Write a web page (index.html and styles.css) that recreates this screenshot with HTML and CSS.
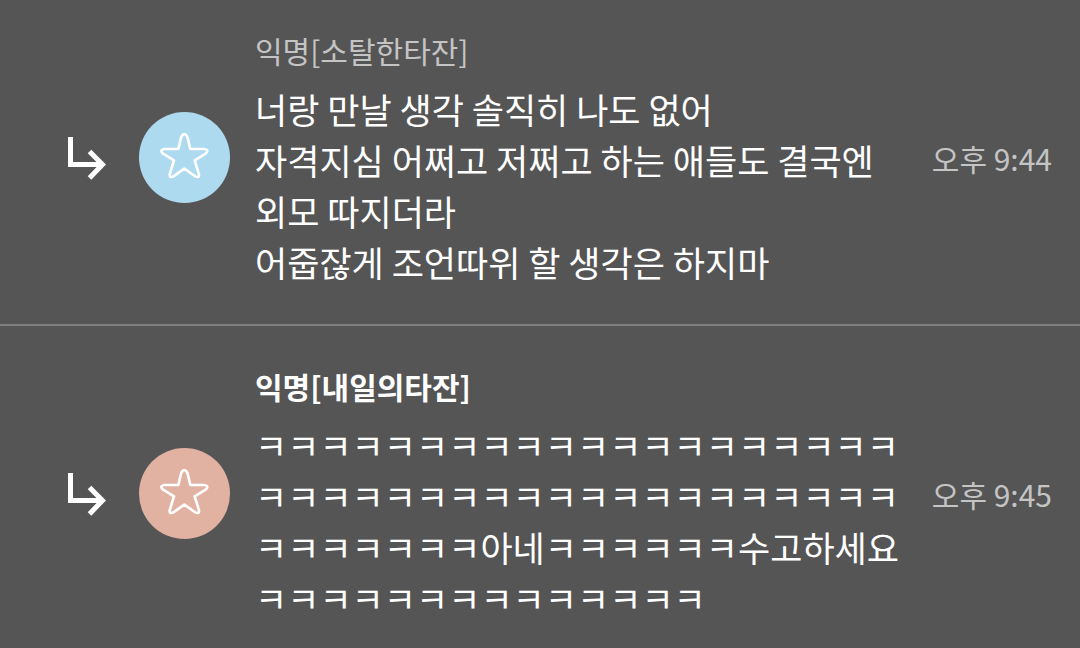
FILE: index.html
```html
<!DOCTYPE html>
<html lang="ko">
<head>
  <meta charset="UTF-8" />
  <meta name="viewport" content="width=device-width, initial-scale=1.0" />
  <title>댓글</title>
  <link rel="stylesheet" href="styles.css">
</head>
<body>
  <main class="replies">
    <article class="reply">
      <svg class="reply-arrow" viewBox="0 0 38 48" aria-hidden="true">
        <path d="M2.5 4V31.5H34M21.5 18.5L34.5 31.5L21.5 45" />
      </svg>
      <div class="avatar blue">
        <svg class="star" viewBox="353 128 162 153" aria-hidden="true">
          <path d="M423 142Q432 127 441 142L450 179H492Q507 182 497 192L463 213L476 255Q477 267 465 261L432 238L399 261Q387 267 388 255L401 213L367 192Q357 182 372 179H414Z" />
        </svg>
      </div>
      <div class="content">
        <h2 class="name">익명[소탈한타잔]</h2>
        <p class="text">너랑 만날 생각 솔직히 나도 없어<br>자격지심 어쩌고 저쩌고 하는 애들도 결국엔 외모 따지더라<br>어줍잖게 조언따위 할 생각은 하지마</p>
      </div>
      <time class="time" datetime="21:44">오후 9:44</time>
    </article>

    <article class="reply">
      <svg class="reply-arrow" viewBox="0 0 38 48" aria-hidden="true">
        <path d="M2.5 4V31.5H34M21.5 18.5L34.5 31.5L21.5 45" />
      </svg>
      <div class="avatar pink">
        <svg class="star" viewBox="353 128 162 153" aria-hidden="true">
          <path d="M423 142Q432 127 441 142L450 179H492Q507 182 497 192L463 213L476 255Q477 267 465 261L432 238L399 261Q387 267 388 255L401 213L367 192Q357 182 372 179H414Z" />
        </svg>
      </div>
      <div class="content">
        <h2 class="name mine">익명[내일의타잔]</h2>
        <p class="text">ㅋㅋㅋㅋㅋㅋㅋㅋㅋㅋㅋㅋㅋㅋㅋㅋㅋㅋㅋㅋㅋㅋㅋㅋㅋㅋㅋㅋㅋㅋㅋㅋㅋㅋㅋㅋㅋㅋㅋㅋㅋㅋㅋㅋㅋㅋㅋ아네ㅋㅋㅋㅋㅋㅋ수고하세요ㅋㅋㅋㅋㅋㅋㅋㅋㅋㅋㅋㅋㅋㅋ</p>
      </div>
      <time class="time" datetime="21:45">오후 9:45</time>
    </article>
  </main>
</body>
</html>
```
FILE: styles.css
```css
body {
  font-family: "Noto Sans CJK JP", "Noto Sans CJK KR", sans-serif;
  font-feature-settings: "locl" 0;
  background: #555;
  color: #fff;
  margin: 0;
  overflow: hidden;
}

/* the list is scrolled a little past its top */
.replies {
  margin-top: -10px;
}

.reply {
  display: flex;
  align-items: center;
  padding: 0 28px 0 68px;
  border-bottom: 2px solid #7f7f7f;
}

.reply-arrow {
  flex: none;
  width: 38px;
  height: 48px;
  margin-right: 33px;
  fill: none;
  stroke: #fff;
  stroke-width: 5;
}

.avatar {
  flex: none;
  display: flex;
  align-items: center;
  justify-content: center;
  width: 91px;
  height: 91px;
  border-radius: 50%;
}

.blue {
  background: #aedaf0;
}

.pink {
  background: #e1b2a2;
}

.star {
  width: 54px;
  height: 51px;
  fill: none;
  stroke: #fff;
  stroke-width: 8;
  stroke-linejoin: round;
}

.content {
  flex: 1;
  padding: 38px 26px 37px 25px;
}

.name {
  margin: 0 0 11px;
  font-size: 30px;
  font-weight: 400;
  line-height: 44px;
  color: #c4c4c4;
}

.mine {
  font-weight: 700;
  color: #fff;
}

.text {
  margin: 0;
  font-size: 35px;
  line-height: 51px;
}

.time {
  flex: none;
  padding-top: 2px;
  font-size: 30px;
  line-height: 44px;
  color: #c4c4c4;
}
```
